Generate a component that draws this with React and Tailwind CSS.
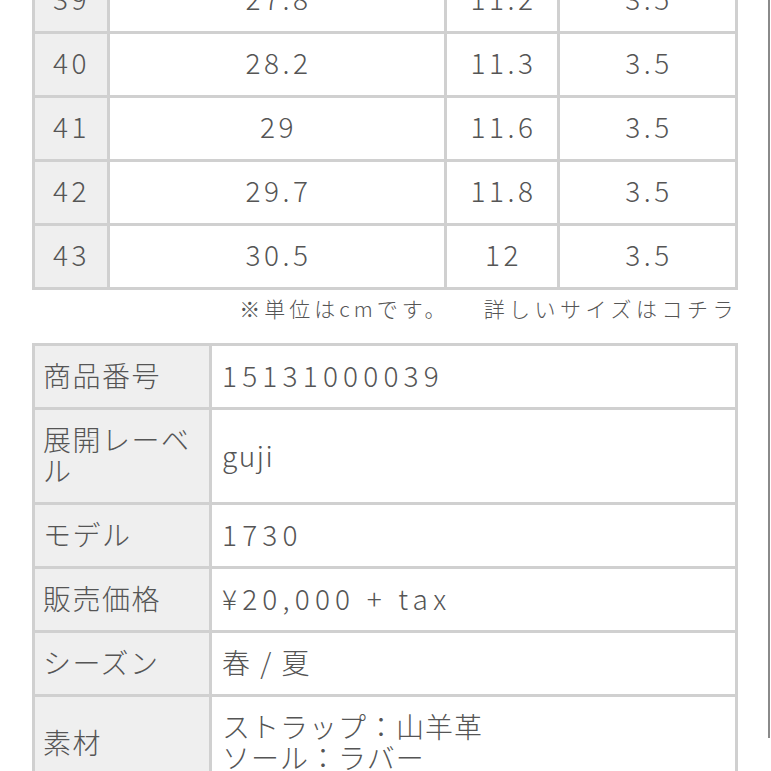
import React from "react";

const sizeRows = [
  ["39", "27.8", "11.2", "3.5"],
  ["40", "28.2", "11.3", "3.5"],
  ["41", "29", "11.6", "3.5"],
  ["42", "29.7", "11.8", "3.5"],
  ["43", "30.5", "12", "3.5"],
];

const NUM = "tracking-[5.2px]";
const JP = "tracking-[1.5px]";

const infoRows = [
  { label: ["商品番号"], value: ["15131000039"], vt: NUM, h: "h-[61px]" },
  { label: ["展開レーベ", "ル"], value: ["guji"], vt: "tracking-[1.5px]", h: "h-[92px]" },
  { label: ["モデル"], value: ["1730"], vt: NUM, h: "h-[61px]" },
  { label: ["販売価格"], value: ["¥20,000 + tax"], vt: NUM, h: "h-[61px]" },
  { label: ["シーズン"], value: ["春 / 夏"], vt: "tracking-[2px]", h: "h-[61px]" },
  { label: ["素材"], value: ["ストラップ：山羊革", "ソール：ラバー"], vt: "tracking-[1px]", h: "h-[92px]" },
];

export default function App() {
  return (
    <div
      className="w-[771px] h-[771px] overflow-hidden bg-white text-[#555555] font-light"
      style={{ fontFamily: '"Noto Sans CJK JP", "Noto Sans", sans-serif' }}
    >
      <div className="w-[770px] h-[771px] border-r-[2px] border-[#8a8a8a] pl-[32px]">
        {/* size table */}
        <div className="mt-[-33px] w-[706px] bg-[#d0d0d0] p-[3px] grid grid-cols-[72px_334px_110px_175px] gap-[3px]">
          {sizeRows.map((r) => (
            <React.Fragment key={r[0]}>
              <div className="h-[61px] bg-[#efefef] flex items-center justify-center pb-[5px] text-[28px] tracking-[3.5px] pl-[1px]">
                {r[0]}
              </div>
              {r.slice(1).map((c, i) => (
                <div
                  key={i}
                  className="h-[61px] bg-white flex items-center justify-center pb-[5px] text-[28px] tracking-[3.5px] pl-[3px]"
                >
                  {c}
                </div>
              ))}
            </React.Fragment>
          ))}
        </div>

        {/* note */}
        <div className="mt-[3px] w-[706px] h-[30px] flex justify-end items-center text-[21px] leading-[30px] tracking-[4.5px]">
          <span className="tracking-[4px]">※単位はcmです。</span>
          <span className="ml-[34px]">詳しいサイズはコチラ</span>
        </div>

        {/* info table */}
        <div className="mt-[20px] w-[706px] bg-[#d0d0d0] p-[3px] grid grid-cols-[174px_523px] gap-[3px]">
          {infoRows.map((r, idx) => (
            <React.Fragment key={idx}>
              <div
                className={`${r.h} bg-[#efefef] flex flex-col justify-center pl-[8px] pb-[2px] text-[28px] leading-[31px] ${JP}`}
              >
                {r.label.map((l, i) => (
                  <div key={i}>{l}</div>
                ))}
              </div>
              <div
                className={`${r.h} bg-white flex flex-col justify-center pl-[10px] pb-[2px] text-[28px] leading-[31px] ${r.vt}`}
              >
                {r.value.map((v, i) => (
                  <div key={i}>{v}</div>
                ))}
              </div>
            </React.Fragment>
          ))}
        </div>
      </div>
    </div>
  );
}
